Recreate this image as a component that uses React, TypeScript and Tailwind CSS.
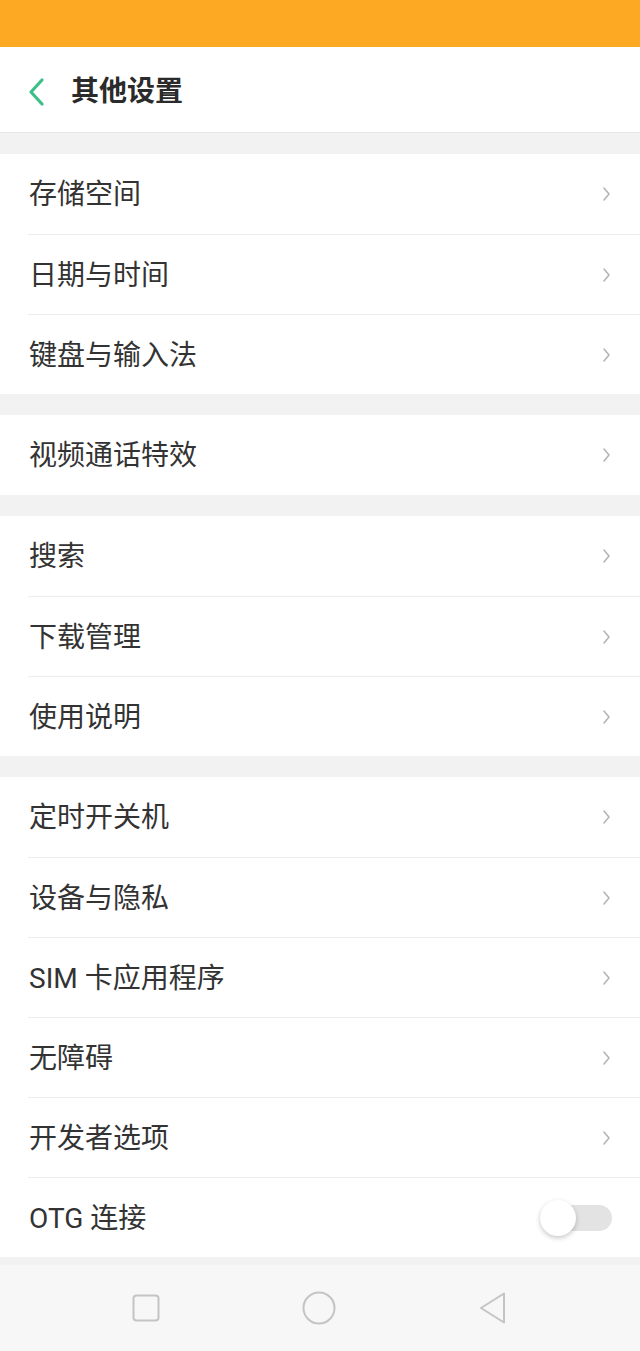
import React, { useState } from 'react';

interface Row {
  label: string;
  toggle?: boolean;
}

const groups: Row[][] = [
  [{ label: '存储空间' }, { label: '日期与时间' }, { label: '键盘与输入法' }],
  [{ label: '视频通话特效' }],
  [{ label: '搜索' }, { label: '下载管理' }, { label: '使用说明' }],
  [
    { label: '定时开关机' },
    { label: '设备与隐私' },
    { label: 'SIM 卡应用程序' },
    { label: '无障碍' },
    { label: '开发者选项' },
    { label: 'OTG 连接', toggle: true },
  ],
];

const Chevron = () => (
  <svg width="10" height="16" viewBox="0 0 10 16" fill="none">
    <path d="M2 2l5 6-5 6" stroke="#b5b5b5" strokeWidth="1.6" strokeLinecap="round" strokeLinejoin="round" />
  </svg>
);

const Toggle = () => {
  const [on, setOn] = useState(false);
  return (
    <button
      onClick={() => setOn(!on)}
      className={`relative w-[72px] h-[26px] rounded-full ${on ? 'bg-[#3cc08a]' : 'bg-[#e3e3e3]'}`}
    >
      <span
        className={`absolute top-1/2 -translate-y-1/2 w-[36px] h-[36px] rounded-full bg-white shadow-[0_2px_5px_rgba(0,0,0,0.22)] ${on ? 'right-0' : 'left-0'}`}
      />
    </button>
  );
};

export default function App() {
  return (
    <div
      className="w-[640px] h-[1351px] flex flex-col bg-[#f2f2f2] text-[#333333]"
      style={{ fontFamily: 'Roboto, "Noto Sans CJK SC", sans-serif' }}
    >
      {/* status bar */}
      <div className="h-[47px] bg-[#fda923]" />

      {/* header */}
      <div className="h-[86px] bg-white border-b border-[#e6e6e6] flex items-center pl-[26px] pt-[4px]">
        <svg width="20" height="30" viewBox="0 0 20 30" fill="none">
          <path d="M16 3L5 15l11 12" stroke="#3cc08a" strokeWidth="3.2" strokeLinecap="round" strokeLinejoin="round" />
        </svg>
        <h1 className="ml-[25px] text-[28px] font-bold text-[#2b2b2b] leading-none">其他设置</h1>
      </div>

      <div className="flex flex-col gap-[21px] pt-[21px]">
        {groups.map((group, gi) => (
          <div key={`group-${gi}`} className="bg-white">
            {group.map((row, ri) => (
              <div key={row.label} className="pl-[28px]">
                <div
                  className={`h-[80px] flex items-center justify-between pr-[28px] ${
                    ri > 0 ? 'border-t border-[#ececec]' : ''
                  }`}
                >
                  <span className="text-[28px] leading-none pl-[1px] pt-[2px]">{row.label}</span>
                  {row.toggle ? <Toggle /> : <Chevron />}
                </div>
              </div>
            ))}
          </div>
        ))}
      </div>

      {/* nav bar */}
      <div className="mt-auto h-[86px] bg-[#f7f7f7] flex items-center justify-between px-[132px]">
        <svg width="28" height="28" viewBox="0 0 28 28" fill="none">
          <rect x="1.5" y="1.5" width="25" height="25" rx="3" stroke="#c4c4c4" strokeWidth="2" />
        </svg>
        <svg width="34" height="34" viewBox="0 0 34 34" fill="none">
          <circle cx="17" cy="17" r="15.5" stroke="#c4c4c4" strokeWidth="2" />
        </svg>
        <svg width="30" height="34" viewBox="0 0 30 34" fill="none">
          <path d="M26 2.5L3 17l23 14.5z" stroke="#c4c4c4" strokeWidth="2" strokeLinejoin="round" />
        </svg>
      </div>
    </div>
  );
}
